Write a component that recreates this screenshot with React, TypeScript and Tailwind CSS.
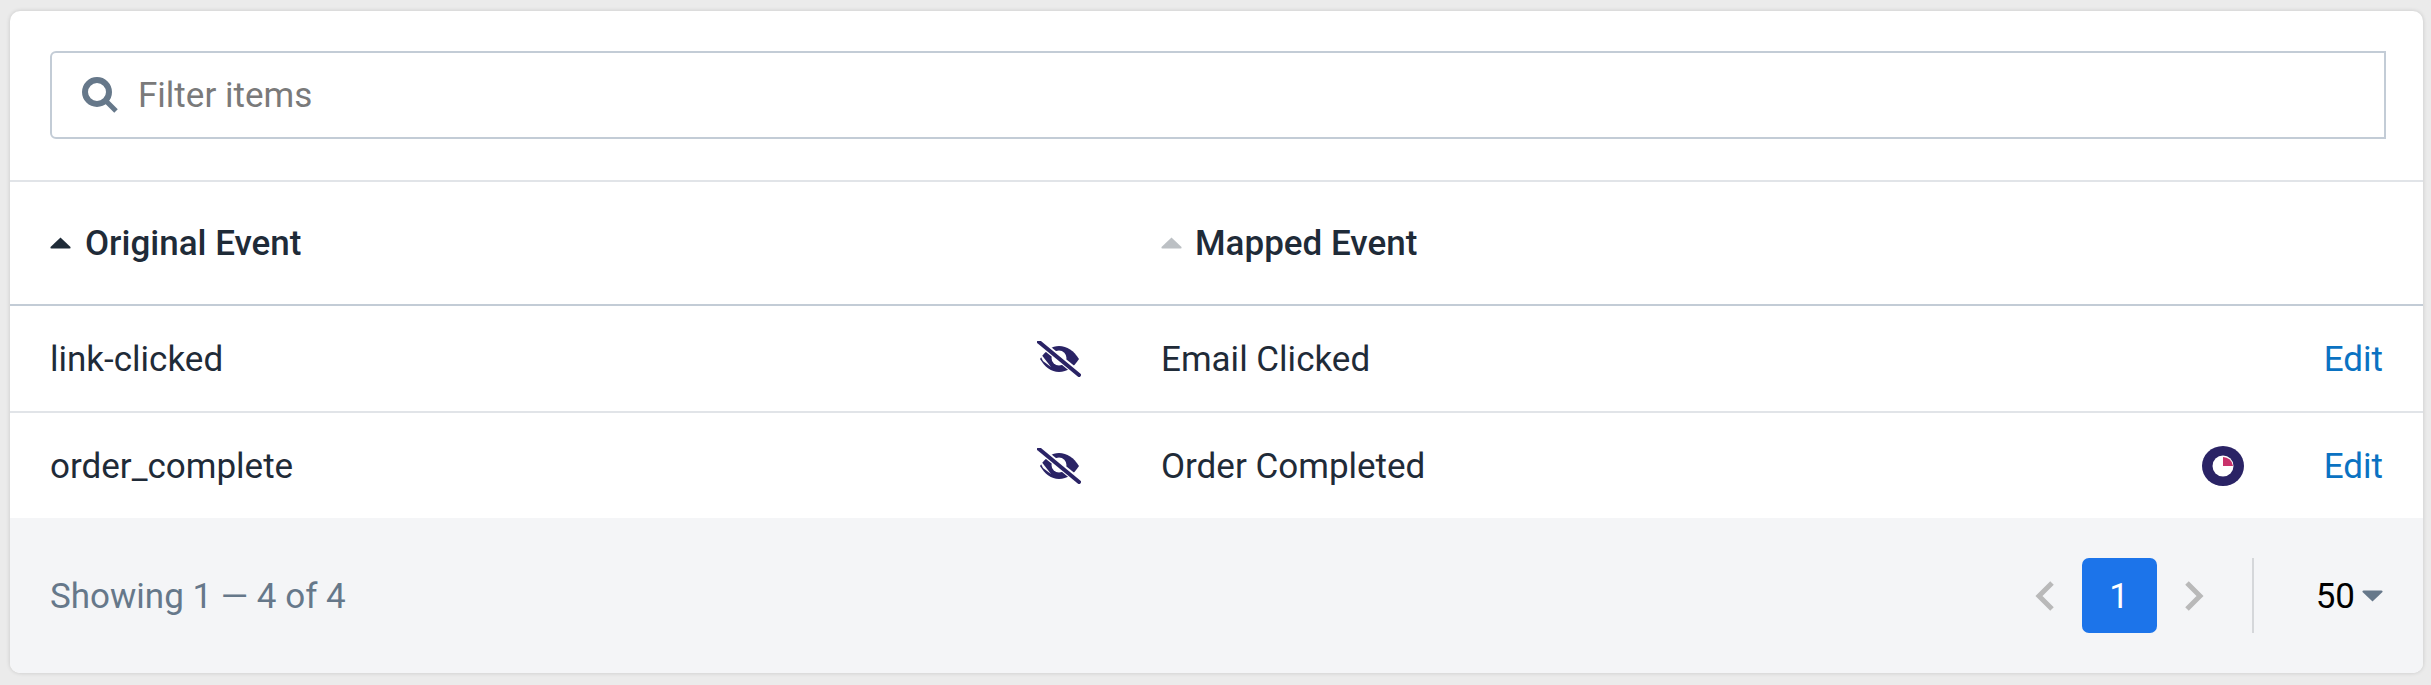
type Row = { original: string; mapped: string; hasBadge: boolean; rowClass: string }

const ROWS: Row[] = [
  { original: 'link-clicked', mapped: 'Email Clicked', hasBadge: false, rowClass: 'h-[107px] border-b-2 border-[#e1e4e8]' },
  { original: 'order_complete', mapped: 'Order Completed', hasBadge: true, rowClass: 'h-[105px]' },
]

function SortCaret({ active }: { active: boolean }) {
  return (
    <svg width="21" height="12" viewBox="0 0 21 12" className={active ? 'text-[#1f2b38]' : 'text-[#bcc0c4]'}>
      <path d="M10.5 0.5 L20.5 10 Q21 11.5 19.5 11.5 L1.5 11.5 Q0 11.5 0.5 10 Z" fill="currentColor" />
    </svg>
  )
}

function SearchIcon() {
  return (
    <svg width="36" height="36" viewBox="0 0 36 36" className="text-[#66788a]">
      <circle cx="15" cy="15" r="12" fill="none" stroke="currentColor" strokeWidth="6" />
      <path d="M23 23 L34 34" stroke="currentColor" strokeWidth="5" />
    </svg>
  )
}

function EyeOff() {
  return (
    <svg width="44" height="36" viewBox="0 0 44 36" className="text-[#2a2365]">
      <path
        d="M3 18 C9 9 15 5 22 5 C30 5 37 10 42 18 C37 26 30 31 22 31 C14 31 8 26 3 18 Z"
        fill="currentColor"
      />
      <circle cx="22" cy="17" r="7.5" fill="white" />
      <path d="M20 12 L28 21 A7 7 0 0 1 20 12 Z" fill="currentColor" />
      <path d="M0 8 L6 20 L14 26 Z" fill="white" />
      <path d="M1 0 L43 34" stroke="white" strokeWidth="7" />
      <path d="M2 1 L42 34" stroke="currentColor" strokeWidth="4" strokeLinecap="round" />
    </svg>
  )
}

function PieBadge() {
  return (
    <svg width="42" height="40" viewBox="0 0 42 40">
      <ellipse cx="21" cy="20" rx="21" ry="20" fill="#2a2365" />
      <circle cx="21" cy="20" r="10.5" fill="white" />
      <path d="M21 11 A10 10 0 0 1 31 20 L21 20 Z" fill="#c9336b" />
    </svg>
  )
}

export default function App() {
  return (
    <div className="min-h-[685px] bg-[#ebebeb] pl-[10px] pr-2 pt-[11px] font-['Roboto',sans-serif]">
      <div className="h-[662px] overflow-hidden rounded-[10px] bg-white shadow-[0_0_4px_rgba(0,0,0,0.16)]">
        {/* Filter */}
        <div className="h-[171px] border-b-2 border-[#e1e4e8] pl-10 pr-[37px] pt-10">
          <div className="flex h-[88px] items-center gap-[20px] rounded-l-[6px] border-2 border-[#c3ccd6] pl-[30px]">
            <SearchIcon />
            <span className="pt-[3px] text-[35px] text-[#7a7a7a]">Filter items</span>
          </div>
        </div>

        {/* Header */}
        <div className="flex h-[124px] items-center border-b-2 border-[#c3ccd6] pl-10 text-[35px] font-medium text-[#1f2b38]">
          <div className="flex w-[1111px] items-center gap-[14px]">
            <SortCaret active />
            <span className="pt-[2px]">Original Event</span>
          </div>
          <div className="flex items-center gap-[13px]">
            <SortCaret active={false} />
            <span className="pt-[2px]">Mapped Event</span>
          </div>
        </div>

        {/* Rows */}
        {ROWS.map(row => (
          <div
            key={row.original}
            className={`flex items-center pl-10 pr-[40px] text-[35px] text-[#1f2b38] ${row.rowClass}`}
          >
            <div className="flex w-[1111px] items-center">
              <span className="flex-1 pt-[3px]">{row.original}</span>
              <span className="mr-[80px]">
                <EyeOff />
              </span>
            </div>
            <span className="flex-1 pt-[3px]">{row.mapped}</span>
            {row.hasBadge && (
              <span className="mr-[80px]">
                <PieBadge />
              </span>
            )}
            <span className="pt-[3px] text-[#0a72c2]">Edit</span>
          </div>
        ))}

        {/* Footer */}
        <div className="flex h-[155px] items-center bg-[#f4f5f7] pl-10 pr-[40px]">
          <span className="flex-1 pt-[3px] text-[35px] text-[#66788a]">Showing 1 — 4 of 4</span>
          <svg width="22" height="32" viewBox="0 0 22 32" className="text-[#b9b9b9]">
            <path d="M18 3 L5 16 L18 29" fill="none" stroke="currentColor" strokeWidth="5" />
          </svg>
          <div className="mx-[26px] flex h-[75px] w-[75px] items-center justify-center rounded-[7px] bg-[#1c74ea] pt-[3px] text-[35px] text-white">
            1
          </div>
          <svg width="22" height="32" viewBox="0 0 22 32" className="text-[#b9b9b9]">
            <path d="M4 3 L17 16 L4 29" fill="none" stroke="currentColor" strokeWidth="5" />
          </svg>
          <div className="ml-[47px] h-[75px] w-[2px] bg-[#d5d7da]" />
          <span className="ml-[62px] pt-[3px] text-[35px] text-black">50</span>
          <svg width="21" height="12" viewBox="0 0 21 12" className="ml-[7px] text-[#66788a]">
            <path d="M10.5 11.5 L20.5 2 Q21 0.5 19.5 0.5 L1.5 0.5 Q0 0.5 0.5 2 Z" fill="currentColor" />
          </svg>
        </div>
      </div>
    </div>
  )
}
